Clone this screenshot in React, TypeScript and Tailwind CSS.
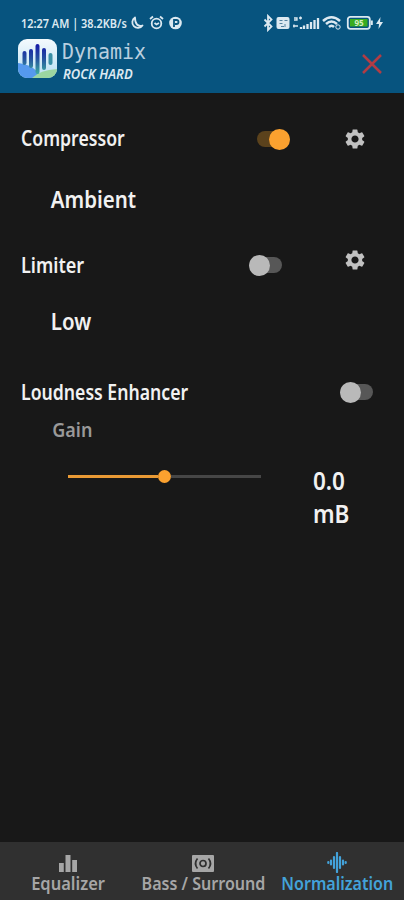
import type { ReactNode } from "react";
import { MdSettings } from "react-icons/md";

const tabs = [
  { label: "Equalizer", icon: <BarsIcon />, width: "w-[136px]", scale: "scale-x-[0.970]", color: "text-[#a6a6a6]" },
  { label: "Bass / Surround", icon: <SurroundIcon />, width: "w-[134px]", scale: "scale-x-[0.945]", color: "text-[#a6a6a6]" },
  { label: "Normalization", icon: <WaveIcon />, width: "w-[134px]", scale: "scale-x-[0.945]", color: "text-[#43a2d9]" },
];

function BarsIcon() {
  return (
    <svg width="18" height="18" viewBox="0 0 18 18" fill="currentColor">
      <path d="M0 9h4.800v9H0zM6.500 1h5v17h-5zM13.200 6H18v12h-4.800z" />
    </svg>
  );
}

function SurroundIcon() {
  return (
    <svg width="22" height="18" viewBox="0 0 22 18" fill="none">
      <rect width="22" height="17" y="1" rx="1" fill="#a6a6a6" />
      <g stroke="#303030" strokeWidth="1.700">
        <circle cx="11" cy="9.500" r="3" />
        <path d="M5.500 4.500Q1.500 9.500 5.500 14.500M16.500 4.500Q20.500 9.500 16.500 14.500" />
      </g>
    </svg>
  );
}

function WaveIcon() {
  return (
    <svg width="20" height="21" viewBox="0 0 20 21" stroke="currentColor" strokeWidth="2.200" strokeLinecap="round">
      <path d="M1.300 10v1M4 8.500v4M7 5v11M10 1v19M13 5v11M16 8.500v4M18.700 10v1" />
    </svg>
  );
}

function Logo() {
  return (
    <svg width="39" height="39" viewBox="0 0 39 39">
      <defs>
        <linearGradient id="bg" x1="0" y1="0" x2="0" y2="1">
          <stop offset="0" stopColor="#f4fafd" />
          <stop offset="1" stopColor="#b7dff3" />
        </linearGradient>
        <linearGradient id="bars" gradientUnits="userSpaceOnUse" x1="0" y1="5" x2="0" y2="34">
          <stop offset="0" stopColor="#1518a8" />
          <stop offset="0.5" stopColor="#24509f" />
          <stop offset="1" stopColor="#3aa6a0" />
        </linearGradient>
        <clipPath id="tile">
          <rect width="39" height="39" rx="9" />
        </clipPath>
      </defs>
      <g clipPath="url(#tile)">
        <rect width="39" height="39" fill="url(#bg)" />
        <path d="M0 24Q12 25 20 33L23 39H0z" fill="#5599ed" />
        <path d="M14 39Q22 31 39 30V39z" fill="#9bd6a1" />
        <g strokeWidth="4" strokeLinecap="round" fill="none">
          <path d="M6.500 14v10M13 12v15M19.500 7v26M26 11v18" stroke="url(#bars)" />
          <path d="M32.500 16v8" stroke="#398fa5" />
        </g>
      </g>
    </svg>
  );
}

function StatusLeftIcons() {
  return (
    <svg width="53" height="16" viewBox="0 0 53 16" fill="none" stroke="#dce9f1" strokeWidth="1.800">
      <path d="M5 2.500A5.600 5.600 0 1 0 12.500 10.500Q9 11.500 7 9.500T5 2.500z" strokeLinejoin="round" />
      <circle cx="26.500" cy="8.500" r="4.800" />
      <path d="M20 4l3-2.500M33 4l-3-2.500M24.500 8l2 1.500 2.500-1.500" />
      <circle cx="45.500" cy="8" r="6.300" fill="#dce9f1" stroke="none" />
      <path d="M44 12V5h2.500a2 2 0 0 1 0 4H45" stroke="#07547f" />
    </svg>
  );
}

function StatusRightIcons() {
  return (
    <svg width="122" height="18" viewBox="0 0 122 18" fill="none" stroke="#dce9f1">
      <path d="M1.500 5.500l7 7L5 16V2l3.500 3.500-7 7" strokeWidth="1.800" />
      <rect x="13.500" y="3" width="13" height="12" rx="2" fill="#dce9f1" stroke="none" />
      <path d="M16.500 6.500h3M16.500 9.500h3M21.500 6.500h3M18 12.500h3M22 10v3" stroke="#55829f" />
      <path d="M31 4h3v2h-3M36 4h3M37.500 2.500v3M30 12h5M31 10.500v3" strokeWidth="1.300" />
      <path d="M38 15v-2M41 15v-3.500M44.500 15v-5M48 15V8M51.500 15V6M55 15V4" strokeWidth="2.300" />
      <path d="M60 7Q68.500-.5 77 7M63 10Q68.500 5 74 10M66 13Q68.500 10.500 71 13" strokeWidth="2.500" />
      <circle cx="75" cy="13" r="2.200" />
      <rect x="84.800" y="2.800" width="22" height="12" rx="2.500" strokeWidth="1.800" />
      <path d="M87 5h17.500v7.500H87z" fill="#39ac20" stroke="none" />
      <path d="M108.800 6.500v4.500" strokeWidth="2" />
      <path d="M117.500 3l-4.500 7h3l-.5 5 4.500-7h-3z" fill="#dce9f1" stroke="none" />
      <text x="91.500" y="11.800" fontSize="8" fill="#d5efc5" stroke="none" className="font-['Noto_Sans',sans-serif] font-bold">95</text>
    </svg>
  );
}

function Text({ className, children }: { className: string; children: ReactNode }) {
  return <div className={`origin-left whitespace-nowrap font-semibold ${className}`}>{children}</div>;
}

function Toggle({ on = false }: { on?: boolean }) {
  return (
    <div className={`flex h-[22px] w-[34px] items-center ${on ? "justify-end" : ""}`}>
      <div className={`flex h-4 w-[33px] items-center rounded-full ${on ? "justify-end bg-[#5b421c]" : "bg-[#575757]"}`}>
        <div className={`size-[21px] shrink-0 rounded-full ${on ? "bg-[#fba12f]" : "bg-[#b9b9b9]"}`} />
      </div>
    </div>
  );
}

export default function App() {
  return (
    <div className="flex h-[900px] w-[404px] flex-col overflow-hidden bg-[#181818] font-['Noto_Sans',sans-serif] text-[#f1f1f1]">
      <header className="h-[93px] bg-[#07547f] pt-[14px]">
        <div className="flex h-[18px] items-center pl-[21px] text-[#dce9f1]">
          <div className="w-[109px]">
            <Text className="scale-x-[0.840] text-[13px] leading-[18px]">12:27 AM | 38.2KB/s</Text>
          </div>
          <StatusLeftIcons />
          <div className="ml-[80px]">
            <StatusRightIcons />
          </div>
        </div>
        <div className="flex pt-[7px] pl-[18px]">
          <Logo />
          <div className="w-[305px] pl-[5px]">
            <div className="h-[26px] origin-left scale-x-[0.950] font-['DejaVu_Sans_Mono',monospace] text-[21px] leading-[27px] text-[#b9cfdf]">
              Dynamix
            </div>
            <Text className="scale-x-[0.930] pl-px text-[14px] leading-[18px] text-[#dce9f1] italic">ROCK HARD</Text>
          </div>
          <svg className="mt-[15px]" width="20" height="20" viewBox="0 0 20 20" stroke="#b13d45" strokeWidth="2.500">
            <path d="M1 1l18 18M19 1L1 19" />
          </svg>
        </div>
      </header>

      <main className="flex-1">
        <section className="flex h-[91px] pt-[34px] pl-[21px]">
          <div className="w-[235px]">
            <Text className="scale-x-[0.840] text-[21px] leading-[22px]">Compressor</Text>
          </div>
          <div className="pt-px">
            <Toggle on />
          </div>
          <MdSettings className="ml-[53px] size-6 text-[#c1c1c1]" />
        </section>
        <Text className="h-[62px] scale-x-[0.890] pl-[57px] text-[23px] leading-[30px]">Ambient</Text>
        <section className="flex h-[60px] pt-[2px] pl-[21px]">
          <div className="w-[228px] pt-[6px]">
            <Text className="scale-x-[0.860] text-[21px] leading-[22px]">Limiter</Text>
          </div>
          <div className="pt-[6px]">
            <Toggle />
          </div>
          <MdSettings className="ml-[60px] size-6 text-[#c1c1c1]" />
        </section>
        <Text className="h-[75px] scale-x-[0.890] pl-[57px] text-[23px] leading-[30px]">Low</Text>
        <section className="flex h-[37px] pl-[21px]">
          <div className="w-[319px]">
            <Text className="scale-x-[0.840] text-[21px] leading-[22px]">Loudness Enhancer</Text>
          </div>
          <Toggle />
        </section>
        <Text className="h-[48px] scale-x-[0.900] pl-[58px] text-[20px] leading-[24px] text-[#999]">Gain</Text>
        <section className="flex pl-[68px]">
          <div className="mt-px flex h-[19px] w-[193px] items-center">
            <div className="h-[3px] w-[90px] bg-[#e99a35]" />
            <div className="size-[13px] rounded-full bg-[#fba12f]" />
            <div className="h-[3px] flex-1 bg-[#464646]" />
          </div>
          <Text className="-mt-[2px] ml-[52px] scale-x-[0.900] text-[25px] leading-[33px]">
            0.0
            <br />
            mB
          </Text>
        </section>
      </main>

      <nav className="flex h-[58px] bg-[#303030]">
        {tabs.map((tab) => (
          <div key={tab.label} className={`flex flex-col items-center pt-[10px] ${tab.width} ${tab.color}`}>
            <div className="flex h-[21px] items-center">{tab.icon}</div>
            <div className={`text-[17px] leading-[22px] font-semibold whitespace-nowrap ${tab.scale}`}>{tab.label}</div>
          </div>
        ))}
      </nav>
    </div>
  );
}
